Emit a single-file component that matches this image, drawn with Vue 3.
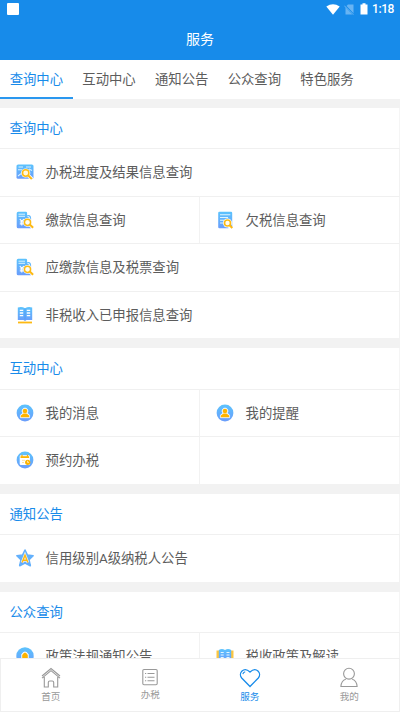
<script setup>
import { ref } from 'vue'

const activeTab = ref(0)
const tabs = ['查询中心', '互动中心', '通知公告', '公众查询', '特色服务']

const sections = [
  {
    title: '查询中心',
    items: [
      { label: '办税进度及结果信息查询', icon: 'progress', wide: true },
      { label: '缴款信息查询', icon: 'payment' },
      { label: '欠税信息查询', icon: 'arrears' },
      { label: '应缴款信息及税票查询', icon: 'payment', wide: true },
      { label: '非税收入已申报信息查询', icon: 'book', wide: true },
    ],
  },
  {
    title: '互动中心',
    items: [
      { label: '我的消息', icon: 'person' },
      { label: '我的提醒', icon: 'person', last: true },
      { label: '预约办税', icon: 'calendar' },
    ],
  },
  {
    title: '通知公告',
    items: [{ label: '信用级别A级纳税人公告', icon: 'star', wide: true }],
  },
  {
    title: '公众查询',
    items: [
      { label: '政策法规通知公告', icon: 'policy' },
      { label: '税收政策及解读', icon: 'guide' },
    ],
  },
]

const nav = [
  { label: '首页', icon: 'home' },
  { label: '办税', icon: 'list' },
  { label: '服务', icon: 'heart' },
  { label: '我的', icon: 'user' },
]
const activeNav = ref(2)
</script>

<template>
  <div class="screen">
    <svg class="sprite" width="0" height="0">
      <defs>
        <linearGradient id="blue" x1="0" y1="0" x2="0" y2="1">
          <stop offset="0" stop-color="#5cc3fd" />
          <stop offset="1" stop-color="#6a9dfb" />
        </linearGradient>
      </defs>
      <symbol id="i-progress" viewBox="0 0 18 18">
        <rect x=".5" y="1.5" width="17" height="14.3" rx="1.6" fill="url(#blue)" />
        <path d="M2.5 4H7M10 4h5M2 6.7h4M2 13l3-2.4M13 6l3 1.4" stroke="#d9f1ff" stroke-width="1.1" fill="none" />
        <circle cx="9.7" cy="10" r="4.6" fill="#fff" />
        <path d="M12 12.3l4 3.8" stroke="#fff" stroke-width="3.6" />
        <circle cx="9.7" cy="10" r="3.2" fill="#fff8df" stroke="#fdbb14" stroke-width="1.5" />
        <path d="M12 12.3l3.8 3.6" stroke="#fdb913" stroke-width="2" />
      </symbol>
      <symbol id="i-payment" viewBox="0 0 18 18">
        <path d="M2.2.7h7.6q1.3 0 1.3 1.3v2h2q2 .7 2 3v10.2H2.2Q.7 17.2.7 15.7V2.2Q.7.7 2.2.7z" fill="url(#blue)" />
        <path d="M2.5 3.2H9M2.5 5.3H9" stroke="#d8f3ff" stroke-width="1" />
        <path d="M3.8 8l2 2.3 2-2.3M5.800 10.300v4.200M3.800 11h4M3.800 12.900h4" stroke="#fff" stroke-width="1.1" fill="none" />
        <path d="M11.400 5q2.300.6 2.500 3" stroke="#e2f4ff" stroke-width="1.1" fill="none" />
        <circle cx="11.5" cy="11.3" r="4.4" fill="#fff" />
        <path d="M13.800 13.500l3.500 3.500" stroke="#fff" stroke-width="3.6" />
        <circle cx="11.5" cy="11.3" r="3.1" fill="#fffdf2" stroke="#fdbb14" stroke-width="1.5" />
        <path d="M13.800 13.500l3.300 3.300" stroke="#fdb913" stroke-width="2" />
      </symbol>
      <symbol id="i-arrears" viewBox="0 0 18 18">
        <rect x="2.2" y=".7" width="14" height="16.5" rx="1.2" fill="url(#blue)" />
        <path d="M4 3.700h10.300M4 6.500h8M4 9.300h4M4 12h3" stroke="#def5ff" stroke-width="1.1" />
        <circle cx="11.5" cy="12" r="4.5" fill="#fff" />
        <path d="M11.500 12l6 6h-5z" fill="#fff" />
        <circle cx="11.5" cy="12" r="3" fill="#fffdf2" stroke="#fdbb14" stroke-width="1.6" />
        <path d="M13.600 14.200l2.700 2.800" stroke="#fdb913" stroke-width="2" />
      </symbol>
      <symbol id="i-book" viewBox="0 0 18 18">
        <path d="M1.800 1.500q4-1.500 7.200.8 3.200-2.300 7.200-.8v12.500H10.500L9 15 7.500 14H1.800z" fill="url(#blue)" />
        <path d="M3.800 4.300h3.400M3.800 7h3.400M3.800 9.700h3.400M10.800 4.300h3.400M10.800 7h3.400M10.800 9.700h3.400" stroke="#fff" stroke-width="1.3" />
        <path d="M9 2.500v11" stroke="#4b9df4" stroke-width=".8" />
        <path d="M2 16.500h14" stroke="#fdb913" stroke-width="1.8" />
      </symbol>
      <symbol id="i-person" viewBox="0 0 18 18">
        <circle cx="9" cy="9" r="8.4" fill="url(#blue)" />
        <path d="M9 4a3 3 0 0 1 2.100 5.100l2.500 2v2.600H4.400v-2.600l2.500-2A3 3 0 0 1 9 4z" fill="#fff" stroke="#fff" stroke-width=".6" />
        <circle cx="9" cy="7" r="2.3" fill="#fdb300" />
        <path d="M4.800 13.200v-1.600l2.700-2h3l2.700 2v1.600z" fill="#fdb300" />
      </symbol>
      <symbol id="i-calendar" viewBox="0 0 18 18">
        <circle cx="9" cy="9" r="8.4" fill="url(#blue)" />
        <rect x="3.7" y="4.3" width="10.2" height="9.8" rx="1.3" fill="#fff" />
        <path d="M4.500 7V5.200h8.600V7z" fill="#fdb300" />
        <path d="M6 3.700v2M11.500 3.700v2" stroke="#fdb300" stroke-width="1.2" />
        <path d="M6 9.300h3M6 11.500h2" stroke="#ffe3a0" />
        <circle cx="11.7" cy="11.3" r="2.6" fill="#fdb300" />
        <path d="M11.600 9.800v1.600h1.300" stroke="#fff" stroke-width=".7" fill="none" />
      </symbol>
      <symbol id="i-star" viewBox="0 0 18 18">
        <path d="M9 1l2.400 5 5.700.8-4.100 4 1.300 5.900L9 14l-5.300 2.700L5 10.800l-4.100-4 5.700-.8z" fill="url(#blue)" stroke="#63b0fc" stroke-width="1.6" stroke-linejoin="round" />
        <path d="M6.100 13.500L9 6.200l2.900 7.300M7 11.300h4" stroke="#e9f3ff" stroke-width="2.7" fill="none" />
        <path d="M6.100 13.500L9 6.200l2.900 7.300M7 11.300h4" stroke="#fdb913" stroke-width="1.4" fill="none" />
      </symbol>
      <symbol id="i-policy" viewBox="0 0 18 18">
        <circle cx="9" cy="9" r="8.7" fill="url(#blue)" />
        <path d="M5.300 14V7.500Q9 1.400 12.700 7.500V14z" fill="#fff" />
        <path d="M6.200 14V8Q9 3 11.800 8v6z" fill="#fdb300" />
      </symbol>
      <symbol id="i-guide" viewBox="0 0 18 18">
        <path d="M.5 3.500h17v11H.5z" fill="#fdc640" />
        <path d="M2.800 3Q6 1.200 9 3q3-1.800 6.200 0V14H2.800z" fill="url(#blue)" />
        <path d="M4.700 5.500h3M4.700 8h3M10.500 5.500h3M10.500 8h3M4.700 10.500h3M10.500 10.500h3" stroke="#e4f6ff" stroke-width="1.2" />
      </symbol>
      <symbol id="i-home" viewBox="0 0 22 22">
        <path d="M2 11.200L11 3.700l9 7.500M2 9L11 1.500 20 9M4.300 10v10h4v-4.500q0-1.500 1.500-1.500h2.400q1.500 0 1.500 1.500V20h4V10" />
      </symbol>
      <symbol id="i-list" viewBox="0 0 22 22">
        <rect x="3.8" y="2.5" width="14.4" height="15.3" rx="1.2" />
        <path d="M8.500 6.500h7M8.500 10.200h7M8.500 13.800h7M6 6.500h1.200M6 10.200h1.200M6 13.800h1.200" />
      </symbol>
      <symbol id="i-heart" viewBox="0 0 22 22">
        <path d="M11 19.500L2.700 11C-1.200 6.300 4.700-.8 11 5c6.300-5.800 12.200 1.300 8.300 6z" stroke-width="1.3" />
        <path d="M3.800 7.200q.5-2 2.400-2.500" />
      </symbol>
      <symbol id="i-user" viewBox="0 0 22 22">
        <circle cx="11" cy="6.7" r="5.4" />
        <path d="M7.800 12.200Q3.300 13.500 2.900 19.500h16.200q-.4-6-4.900-7.300" />
      </symbol>
    </svg>

    <header class="top">
      <div class="status">
        <span class="app-dot"></span>
        <svg class="wifi" viewBox="0 0 14 11"><path d="M.3 2.500Q7-2 13.700 2.500L7 10.700z" fill="#fff" /></svg>
        <svg class="sim" viewBox="0 0 10 11">
          <path d="M4 .5h5.500v10h-8V3z" fill="#68b4f3" />
          <path d="M.5 1l9 9.500" stroke="#178bea" stroke-width="1.8" />
          <path d="M.2 1.600l9 9" stroke="#80c1f6" stroke-width=".8" />
        </svg>
        <svg class="battery" viewBox="0 0 8 12"><path d="M.5 1.500h2V.3h3v1.200h2v10h-7z" fill="#fff" /></svg>
        <span class="time">1:18</span>
      </div>
      <h1 class="title">服务</h1>
    </header>

    <div class="tabs">
      <div v-for="(tab, i) in tabs" :key="tab" class="tab" :class="{ active: i === activeTab }" @click="activeTab = i">{{ tab }}</div>
    </div>

    <main class="content">
      <section v-for="s in sections" :key="s.title" class="section">
        <h2 class="heading">{{ s.title }}</h2>
        <div class="grid">
          <div v-for="item in s.items" :key="item.label" class="cell" :class="{ wide: item.wide, last: item.last }">
            <svg class="icon"><use :href="'#i-' + item.icon" /></svg>
            <span class="label">{{ item.label }}</span>
          </div>
        </div>
      </section>
    </main>

    <nav class="nav">
      <div v-for="(n, i) in nav" :key="n.label" class="nav-item" :class="[n.icon, { active: i === activeNav }]" @click="activeNav = i">
        <svg class="nav-icon"><use :href="'#i-' + n.icon" /></svg>
        <span>{{ n.label }}</span>
      </div>
    </nav>
  </div>
</template>

<style>
body {
  margin: 0;
  overflow: hidden;
}
</style>

<style scoped>
.screen {
  display: flex;
  flex-direction: column;
  width: 400px;
  height: 712px;
  overflow: hidden;
  background: #f2f2f2;
  color: #5c5c5c;
  font: 13.35px/20px Roboto, "Noto Sans CJK SC", sans-serif;
}
.sprite {
  position: absolute;
}
.top {
  flex: none;
  height: 60px;
  background: #178bea;
  color: #fff;
}
.status {
  display: flex;
  align-items: center;
  height: 18px;
  padding: 0 6px 0 7px;
}
.app-dot {
  width: 12px;
  height: 12px;
  margin-right: auto;
  border-radius: 1px;
  background: #fff;
}
.wifi {
  width: 14px;
  height: 11px;
}
.sim {
  width: 10px;
  height: 11px;
  margin-left: 4px;
}
.battery {
  width: 8px;
  height: 12px;
  margin-left: 6px;
}
.time {
  width: 22px;
  margin-left: 4px;
  font-size: 12px;
  font-weight: 500;
  letter-spacing: -0.4px;
  white-space: nowrap;
}
.title {
  margin: 0;
  padding-top: 11px;
  font-size: 14px;
  font-weight: 400;
  line-height: 20px;
  text-align: center;
}
.tabs {
  display: flex;
  flex: none;
  height: 39px;
  margin-bottom: 8.7px;
  background: #fff;
}
.tab {
  box-sizing: border-box;
  height: 39px;
  padding: 0 9.65px;
  line-height: 40px;
}
.tab.active {
  border-bottom: 2px solid #2a97ef;
  color: #178bea;
}
.content {
  flex: 1;
  min-height: 0;
  overflow: hidden;
}
.section {
  margin-bottom: 10px;
  background: #fff;
  box-shadow: inset -1px 0 #f5f5f5;
}
.heading {
  box-sizing: border-box;
  height: 40.5px;
  margin: 0;
  padding-left: 9.5px;
  font-size: 13.35px;
  font-weight: 400;
  line-height: 42px;
  color: #178bea;
}
.grid {
  display: grid;
  grid-template-columns: 1fr 1fr;
  grid-auto-rows: 47.5px;
}
.cell {
  display: flex;
  align-items: center;
  box-sizing: border-box;
  gap: 12px;
  padding-left: 15.6px;
  border-top: 1px solid #f0f0f0;
  border-right: 1px solid #f2f2f2;
}
.wide {
  grid-column: span 2;
}
.last {
  box-shadow: 0 1px #f0f0f0;
}
.icon {
  width: 18px;
  height: 18px;
}
.label {
  padding-top: 2px;
}
.nav {
  display: flex;
  box-sizing: border-box;
  flex: none;
  height: 54px;
  border: 1px solid #efefef;
  background: #fff;
}
.nav-item {
  display: flex;
  flex: 1;
  flex-direction: column;
  align-items: center;
  padding-top: 8px;
  font-size: 9.6px;
  line-height: 15px;
  color: #999;
}
.nav-item.active {
  color: #178bea;
}
.nav-icon {
  width: 22px;
  height: 22px;
  stroke: currentColor;
  stroke-width: 1.1;
  fill: none;
}
.nav-item.list .nav-icon {
  margin-bottom: -2px;
}
</style>
